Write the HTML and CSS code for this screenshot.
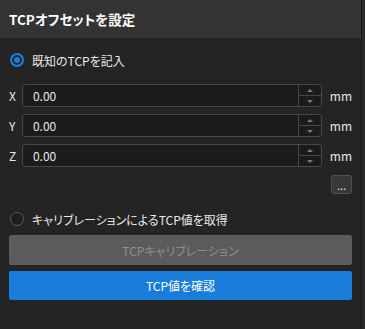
FILE: index.html
```html
<!DOCTYPE html>
<html lang="ja">
<head>
    <meta charset="UTF-8">
    <title>TCPオフセットを設定</title>
    <link rel="stylesheet" href="styles.css">
</head>
<body>
    <div id="panel">
        <div class="panelHeader">TCPオフセットを設定</div>
        <div class="panelBody">
            <label class="radioRow">
                <span class="radio checked"></span>
                <span>既知のTCPを記入</span>
            </label>
            <div class="fields">
                <div class="fieldRow">
                    <span class="axis">X</span>
                    <div class="spinBox">
                        <span class="value">0.00</span>
                        <div class="spinButtons"><span class="up"></span><span class="down"></span></div>
                    </div>
                    <span class="unit">mm</span>
                </div>
                <div class="fieldRow">
                    <span class="axis">Y</span>
                    <div class="spinBox">
                        <span class="value">0.00</span>
                        <div class="spinButtons"><span class="up"></span><span class="down"></span></div>
                    </div>
                    <span class="unit">mm</span>
                </div>
                <div class="fieldRow">
                    <span class="axis">Z</span>
                    <div class="spinBox">
                        <span class="value">0.00</span>
                        <div class="spinButtons"><span class="up"></span><span class="down"></span></div>
                    </div>
                    <span class="unit">mm</span>
                </div>
            </div>
            <div class="moreRow"><button class="moreButton">...</button></div>
            <label class="radioRow second">
                <span class="radio"></span>
                <span>キャリブレーションによるTCP値を取得</span>
            </label>
            <button class="wideButton disabled">TCPキャリブレーション</button>
            <button class="wideButton primary">TCP値を確認</button>
        </div>
    </div>
</body>
</html>
```

FILE: styles.css
```css
body {
    margin: 0;
    height: 100vh;
    background: #2b2b2b;
    font-family: 'Noto Sans CJK JP', 'Noto Sans', sans-serif;
    font-feature-settings: "palt";
    color: #e8e8e8;
    font-size: 12px;
    overflow: hidden;
}
#panel {
    width: 361px;
    height: 100%;
    background: #242424;
    border-right: 1px solid #191919;
}
.panelHeader {
    height: 38px;
    background: #333333;
    display: flex;
    align-items: center;
    padding-left: 9px;
    font-size: 13.5px;
    font-weight: bold;
    color: #ffffff;
}
.panelBody {
    padding: 0 9px;
    display: flex;
    flex-direction: column;
}
.radioRow {
    display: flex;
    align-items: center;
    gap: 8px;
    height: 16px;
    margin-top: 14px;
    padding-left: 1px;
}
.radioRow.second {
    margin-top: 17px;
}
.radio {
    width: 14px;
    height: 14px;
    box-sizing: border-box;
    border-radius: 50%;
    border: 1px solid #5a5a5a;
    background: #1e1e1e;
}
.radio.checked {
    border: 2px solid #1a7fdc;
    background: #1a7fdc;
    box-shadow: inset 0 0 0 2px #242424;
}
.fields {
    display: flex;
    flex-direction: column;
    gap: 7px;
    margin-top: 16px;
}
.fieldRow {
    display: flex;
    align-items: center;
    height: 23px;
}
.axis {
    width: 13px;
}
.spinBox {
    width: 301px;
    height: 23px;
    box-sizing: border-box;
    border: 1px solid #474747;
    border-radius: 3px;
    background: #1b1b1b;
    display: flex;
    align-items: center;
}
.value {
    flex: 1;
    padding-left: 10px;
}
.spinButtons {
    width: 22px;
    height: 100%;
    border-left: 1px solid #474747;
    display: flex;
    flex-direction: column;
}
.spinButtons span {
    flex: 1;
    display: flex;
    align-items: center;
    justify-content: center;
}
.spinButtons .up {
    border-bottom: 1px solid #474747;
}
.spinButtons .up::after {
    content: "";
    border: 3px solid transparent;
    border-bottom: 3px solid #7a7a7a;
    border-top: 0;
}
.spinButtons .down::after {
    content: "";
    border: 3px solid transparent;
    border-top: 3px solid #7a7a7a;
    border-bottom: 0;
}
.unit {
    margin-left: 8px;
}
.moreRow {
    display: flex;
    justify-content: flex-end;
    margin-top: 8px;
}
.moreButton {
    width: 21px;
    height: 19px;
    padding: 0;
    background: #383838;
    border: 1px solid #505050;
    border-radius: 3px;
    color: #e8e8e8;
    font-family: inherit;
    font-size: 11px;
    line-height: 14px;
}
.wideButton {
    height: 30px;
    border: none;
    border-radius: 2px;
    font-family: inherit;
    font-feature-settings: "palt";
    font-size: 12px;
}
.wideButton.disabled {
    margin-top: 8px;
    background: #5b5b5b;
    color: #8e8e8e;
}
.wideButton.primary {
    margin-top: 6px;
    height: 29px;
    background: #1a7ddb;
    color: #ffffff;
}
```
